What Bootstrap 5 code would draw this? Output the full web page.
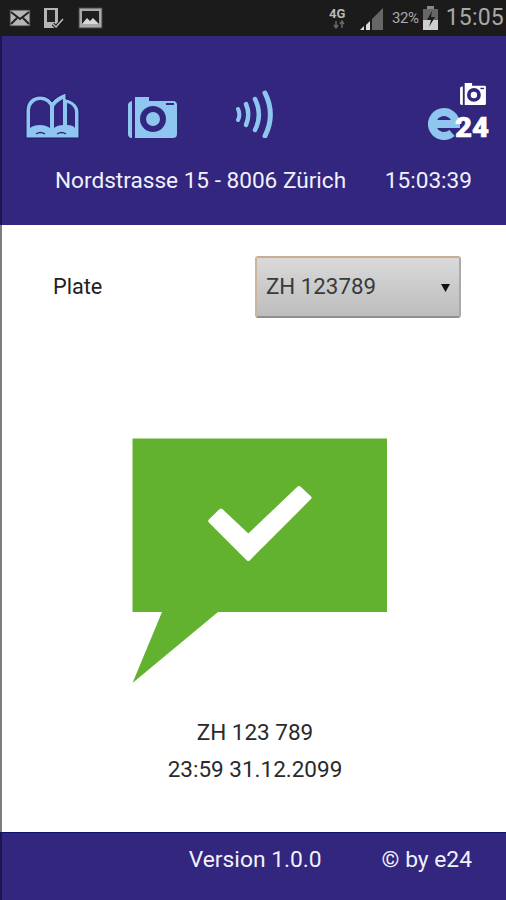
<!DOCTYPE html>
<html lang="en">
  <head>
    <meta charset="UTF-8" />
    <title>e24 Parking</title>
    <link rel="stylesheet" href="https://cdn.jsdelivr.net/npm/bootstrap@5.3.2/dist/css/bootstrap.min.css" />
    <style>
      html, body { height: 100%; }
      body { font-family: Roboto, "Liberation Sans", sans-serif; color: #2b2b2b; background: #fff; }
      .app-shell { width: 506px; height: 900px; overflow: hidden; }
      .status-bar { height: 36px; background: #1b1b1b; color: #a9a9a9; padding: 0 0 0 9px; }
      .status-left { gap: 12px; }
      .status-right { margin-left: auto; padding-right: 2px; }
      .status-pct { font-size: 15px; margin: 0 3px 0 8px; letter-spacing: -0.4px; }
      .status-clock { font-size: 23px; margin-left: 7px; letter-spacing: 0.2px; }
      .app-header { height: 189px; background: #32267f; border-left: 2px solid #1c1650; color: #f1f1fb; }
      .icon-row { height: 124px; padding: 0 16px 0 23px; }
      .icon-book { margin-top: 57px; }
      .icon-cam { margin: 59px 0 0 46px; }
      .icon-nfc { margin: 54px 0 0 58px; }
      .logo-box { margin-left: auto; margin-top: 46px; width: 62px; }
      .logo-cam { margin-right: 2px; display: block; }
      .logo-mark { display: block; }
      .address-row { font-size: 22.6px; padding: 8px 34px 0 53px; line-height: 26px; }
      .app-main { height: 607px; border-left: 2px solid #7d7d7d; }
      .plate-row { padding: 31px 45px 0 51px; }
      .plate-label { font-size: 21.7px; color: #222; }
      .plate-select {
        width: 206px; height: 62px; font-size: 22.3px; color: #3a3a3a; padding: 0 30px 0 9px;
        font-family: Roboto, sans-serif;
        border-style: solid; border-width: 2px;
        border-color: #c8ad94 #a9a9a9 #8f8f8f #cdb49c; border-radius: 3px;
        background: url("data:image/svg+xml,%3Csvg xmlns='http://www.w3.org/2000/svg' width='9' height='9'%3E%3Cpath d='M0 1h9L4.500 9z' fill='%23111'/%3E%3C/svg%3E") no-repeat right 9px center, linear-gradient(#dadada, #c9c9c9 55%, #bdbdbd);
      }
      .bubble-wrap { margin-top: 120px; padding-left: 12px; }
      .result-text { font-size: 22.5px; line-height: 37px; margin-top: 30px; padding-left: 2px; color: #2a2a2a; }
      .app-footer { height: 68px; background: #32267f; border-left: 2px solid #1c1650; border-top: 1px solid #10106e; color: #f1f1fb; font-size: 22.8px; padding: 10px 34px 0 0; }
      .footer-version { margin-right: 60px; }
    </style>
  </head>
  <body>
    <div class="app-shell d-flex flex-column">
      <!-- Status bar -->
      <div class="status-bar d-flex align-items-center">
        <div class="status-left d-flex align-items-center">
          <svg width="22" height="18" viewBox="0 0 22 18"><rect x="1" y="1" width="20" height="16" fill="#b5b5b5" stroke="#333" /><path d="M2 3l9 7 9-7M2 15l6-6M20 15l-6-6" fill="none" stroke="#222" stroke-width="2" /></svg>
          <svg width="23" height="22" viewBox="0 0 23 22"><rect x="1" y="1" width="14" height="20" fill="#b5b5b5" /><rect x="4" y="3" width="8" height="12" fill="#222" /><path d="M10 17l3 3 7-8" fill="none" stroke="#1b1b1b" stroke-width="3.500" /><path d="M10 17l3 3 7-8" fill="none" stroke="#bbb" stroke-width="1.500" /></svg>
          <svg width="25" height="22" viewBox="0 0 25 22"><rect x="1" y="1" width="23" height="20" fill="#a9a9a9" stroke="#444" /><rect x="4" y="4" width="17" height="13" fill="#1e1e1e" /><path d="M4 17l5-6 3 3 3-3 6 6z" fill="#d8d8d8" /></svg>
        </div>
        <div class="status-right d-flex align-items-center">
          <svg width="22" height="26" viewBox="0 0 22 26"><text x="0" y="13" font-family="Roboto, sans-serif" font-weight="700" font-size="13" fill="#b9b9b9">4G</text><path d="M7 16v7M5 20l2 3 2-3M13 23v-7M11 19l2-3 2 3" fill="none" stroke="#666" stroke-width="1.500" /></svg>
          <svg class="ms-2" width="25" height="25" viewBox="0 0 25 25"><path d="M1 24h4v-4z" fill="#ddd" /><path d="M7 24h4v-9l-4 4z" fill="#ddd" /><path d="M13 24h11V2L13 13z" fill="#666" /></svg>
          <span class="status-pct">32%</span>
          <svg width="17" height="26" viewBox="0 0 17 26"><rect x="5" y="1" width="7" height="3" fill="#888" /><rect x="1" y="4" width="15" height="21" fill="#cfcfcf" /><rect x="1" y="4" width="15" height="11" fill="#666" /><path d="M10 6l-5 9h4l-2 7 6-10h-4z" fill="#1b1b1b" /></svg>
          <span class="status-clock">15:05</span>
        </div>
      </div>

      <!-- Header -->
      <header class="app-header">
        <div class="icon-row d-flex align-items-start">
          <svg class="icon-book" width="55" height="46" viewBox="0 0 55 46">
            <path d="M1 45V18C1 8 8 3 15 3c5 0 9 2 12 6 3-4 8-7 14-9v6c6 1 13 6 13 13v26z" fill="#8fc6f0" stroke="#1f1866" stroke-width="1" />
            <path d="M5 35V18C5 11 10 7 15 7c4 0 8 2 10 6v22c-3-2-6-3-10-3-4 0-8 1-10 3zM29 14c1-3 4-5 9-8v26c-3 0-7 1-9 3zM42 10c5 1 8 5 8 9v16c-1-2-4-3-8-3z" fill="#32267f" />
            <path d="M11 41c3-2 6-2 9 0M32 41c3-2 6-2 9 0" stroke="#32267f" stroke-width="1.500" fill="none" />
          </svg>
          <svg class="icon-cam" width="52" height="43" viewBox="0 0 52 43">
            <path d="M2 10c0-2 1-3 4-4V43C3 43 2 41 2 39zM9 2h14v4h24c3 0 4 2 4 4v29c0 3-2 4-4 4H9z" fill="#8fc6f0" />
            <path d="M40 9h8" stroke="#32267f" stroke-width="2" />
            <circle cx="27" cy="24" r="13" fill="#32267f" />
            <circle cx="27" cy="24" r="7" fill="#8fc6f0" />
          </svg>
          <svg class="icon-nfc" width="40" height="48" viewBox="0 0 40 48">
            <g fill="none" stroke="#8fc6f0" stroke-linecap="round">
              <path d="M2 19c2 4 2 7 0 11" stroke-width="4" />
              <path d="M10 14c3 7 3 14 0 21" stroke-width="4.500" />
              <path d="M19 9c5 10 5 21 0 31" stroke-width="4.500" />
              <path d="M29 3c7 14 7 29 0 43" stroke-width="5" />
            </g>
          </svg>
          <div class="logo-box d-flex flex-column align-items-end">
            <svg class="logo-cam" width="30" height="24" viewBox="0 0 30 26">
              <path d="M1 6l2-1h1v20H3l-2-1zM6 1h8v3h14l1 1v19l-1 1H6z" fill="#fff" />
              <circle cx="16" cy="14" r="7.500" fill="#32267f" /><circle cx="16" cy="14" r="3.500" fill="#fff" />
              <path d="M23 7h4" stroke="#32267f" stroke-width="1.500" />
            </svg>
            <svg class="logo-mark" width="62" height="42" viewBox="0 0 62 42">
              <path d="M6 18H28A12 12 0 1 0 24 27" fill="none" stroke="#8fc6f0" stroke-width="8" />
              <text x="27" y="31" font-family="Roboto, sans-serif" font-weight="900" font-size="28" fill="#fff" stroke="#fff" stroke-width="0.600" textLength="34" lengthAdjust="spacingAndGlyphs">24</text>
            </svg>
          </div>
        </div>
        <div class="address-row d-flex justify-content-between">
          <span>Nordstrasse 15 - 8006 Zürich</span>
          <span>15:03:39</span>
        </div>
      </header>

      <!-- Main -->
      <main class="app-main">
        <div class="plate-row d-flex align-items-center justify-content-between">
          <label class="plate-label" for="plate">Plate</label>
          <select class="form-select plate-select" id="plate">
            <option>ZH 123789</option>
          </select>
        </div>
        <div class="bubble-wrap d-flex justify-content-center">
          <svg width="256" height="246" viewBox="0 0 256 246">
            <path d="M0.500 0.500H255V174H86L0.500 245L30 174H0.500z" fill="#62b22f" />
            <path d="M78.300 83L89 72.500L116.300 98.300L167 50L177.500 59.700L116.300 121z" fill="#fff" stroke="#fff" stroke-width="4" stroke-linejoin="round" />
          </svg>
        </div>
        <div class="result-text text-center">
          ZH 123 789<br />
          23:59 31.12.2099
        </div>
      </main>

      <!-- Footer -->
      <footer class="app-footer d-flex justify-content-end align-items-start">
        <span class="footer-version">Version 1.0.0</span>
        <span>© by e24</span>
      </footer>
    </div>
    <script src="https://cdn.jsdelivr.net/npm/bootstrap@5.3.2/dist/js/bootstrap.bundle.min.js"></script>
  </body>
</html>
